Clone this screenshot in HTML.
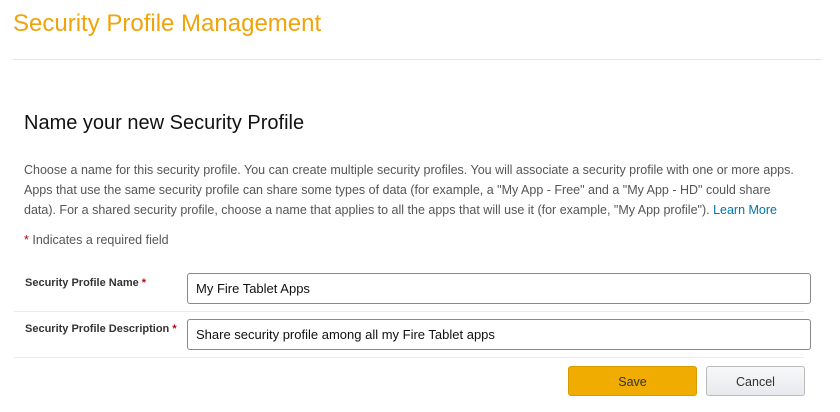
<!DOCTYPE html>
<html><head><meta charset="utf-8"><style>
body{margin:0;width:840px;height:412px;background:#fff;font-family:"Liberation Sans",sans-serif;overflow:hidden;position:relative}
.t{position:absolute;left:13px;top:10px;font-size:24px;color:#f0a30a}
.hr{position:absolute;left:13px;right:19px;top:59px;border-top:1px solid #e3e3e3}
h2{position:absolute;left:24px;top:112px;margin:0;font-size:20px;font-weight:normal;color:#111}
.p{position:absolute;left:24px;top:160px;width:802px;font-size:12.5px;line-height:20px;color:#555}
.p a{color:#0073a8;text-decoration:none}
.req{position:absolute;left:24px;top:233px;font-size:12.5px;color:#555}
.s{color:#c40000}
.lab{position:absolute;left:25px;font-size:11px;font-weight:bold;color:#333}
.in{position:absolute;left:187px;border:1px solid #888;border-radius:3px;font-size:13px;color:#111;padding-left:8px;box-sizing:border-box;width:624px;height:31px;line-height:30px}
.line{position:absolute;left:14px;right:36px;border-top:1px solid #eaeaea}
.b{position:absolute;top:366px;height:30px;border-radius:3px;font-size:12.5px;color:#333;text-align:center;line-height:30px;box-sizing:border-box}
</style></head><body>
<div class="t">Security Profile Management</div>
<div class="hr"></div>
<h2>Name your new Security Profile</h2>
<div class="p">Choose a name for this security profile. You can create multiple security profiles. You will associate a security profile with one or more apps.<br>Apps that use the same security profile can share some types of data (for example, a "My App - Free" and a "My App - HD" could share<br>data). For a shared security profile, choose a name that applies to all the apps that will use it (for example, "My App profile"). <a>Learn More</a></div>
<div class="req"><span class="s">*</span> Indicates a required field</div>
<div class="lab" style="top:277px">Security Profile Name <span class="s">*</span></div>
<div class="in" style="top:273px">My Fire Tablet Apps</div>
<div class="line" style="top:311px"></div>
<div class="lab" style="top:323px">Security Profile Description <span class="s">*</span></div>
<div class="in" style="top:319px">Share security profile among all my Fire Tablet apps</div>
<div class="line" style="top:357px"></div>
<div class="b" style="left:568px;width:129px;background:#f0ac00;border:1px solid #d99a00">Save</div>
<div class="b" style="left:706px;width:99px;background:linear-gradient(#f7f8fa,#e7e9ec);border:1px solid #bbb">Cancel</div>
</body></html>
